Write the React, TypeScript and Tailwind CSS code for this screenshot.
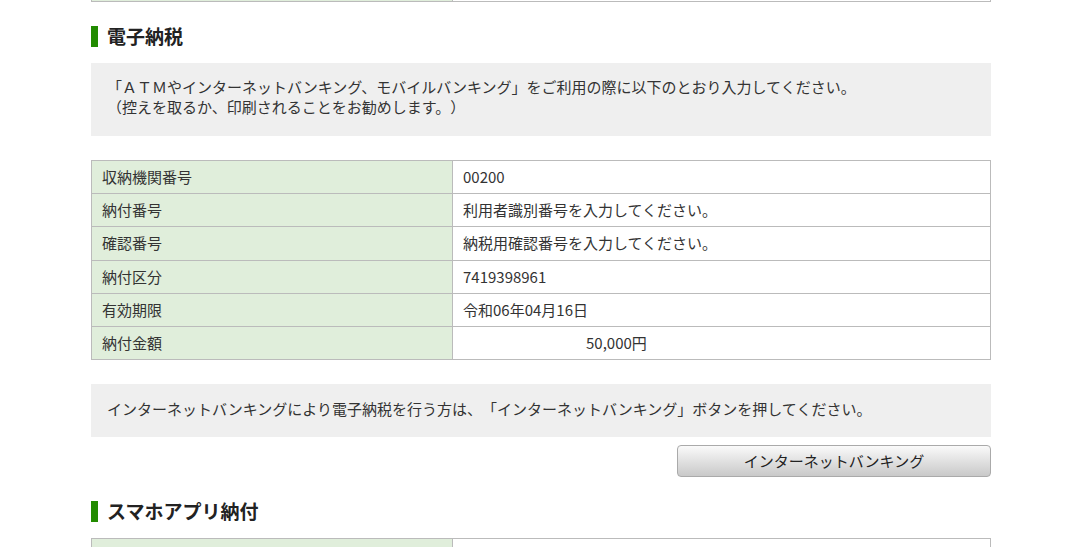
import React from "react";

const font = { fontFamily: '"Noto Sans CJK JP", "Noto Sans", sans-serif' };

function Heading({ children }: { children: React.ReactNode }) {
  return (
    <div className="flex items-center h-[21px]">
      <div className="w-[7px] h-[21px] bg-[#228b00]" />
      <div className="ml-[9px] text-[19px] font-bold leading-[19px] -mt-[2px] text-[#222]">{children}</div>
    </div>
  );
}

const rows: [string, React.ReactNode][] = [
  ["収納機関番号", "00200"],
  ["納付番号", "利用者識別番号を入力してください。"],
  ["確認番号", "納税用確認番号を入力してください。"],
  ["納付区分", "7419398961"],
  ["有効期限", "令和06年04月16日"],
  ["納付金額", <span className="pl-[123px]">50,000円</span>],
];

const rowClass = [
  "h-[32px]",
  "h-[33px] border-t border-[#bbbbbb]",
  "h-[34px] border-t border-[#bbbbbb]",
  "h-[33px] border-t border-[#bbbbbb]",
  "h-[33px] border-t border-[#bbbbbb]",
  "h-[33px] border-t border-[#bbbbbb]",
];

export default function App() {
  return (
    <div className="min-h-[547px] bg-white text-[#333] overflow-hidden [text-spacing-trim:space-all]" style={font}>
      <div className="ml-[91px] w-[900px]">
        {/* tail of previous table */}
        <div className="flex h-[2px] border-b border-[#bbbbbb]">
          <div className="w-[361px] bg-[#e0eedb] border-l border-[#bbbbbb]" />
          <div className="flex-1 border-l border-r border-[#bbbbbb]" />
        </div>

        <div className="mt-[24px]">
          <Heading>電子納税</Heading>
        </div>

        <div className="mt-[16px] bg-[#efefef] pl-[16px] pt-[14px] pb-[19px] text-[15px] leading-[20px]">
          <div>「ＡＴＭやインターネットバンキング、モバイルバンキング」をご利用の際に以下のとおり入力してください。</div>
          <div>（控えを取るか、印刷されることをお勧めします。）</div>
        </div>

        <div className="mt-[24px] border border-[#bbbbbb] text-[15px]">
          {rows.map(([k, v], i) => (
            <div key={i} className={`flex ${rowClass[i]}`}>
              <div className="w-[361px] bg-[#e0eedb] pl-[10px] flex items-center border-r border-[#bbbbbb]">{k}</div>
              <div className="flex-1 pl-[10px] flex items-center">{v}</div>
            </div>
          ))}
        </div>

        <div className="mt-[24px] bg-[#efefef] pl-[16px] pt-[15px] pb-[18px] text-[15px] leading-[20px]">
          インターネットバンキングにより電子納税を行う方は、「インターネットバンキング」ボタンを押してください。
        </div>

        <div className="mt-[8px] flex justify-end">
          <button className="w-[314px] h-[32px] rounded-[4px] border border-[#aaaaaa] bg-gradient-to-b from-[#fafafa] to-[#c9c9c9] text-[15px] text-[#222]" style={font}>
            インターネットバンキング
          </button>
        </div>

        <div className="mt-[24px]">
          <Heading>スマホアプリ納付</Heading>
        </div>

        <div className="mt-[16px] border border-[#bbbbbb] flex h-[40px]">
          <div className="w-[361px] bg-[#e0eedb] border-r border-[#bbbbbb]" />
          <div className="flex-1" />
        </div>
      </div>
    </div>
  );
}
